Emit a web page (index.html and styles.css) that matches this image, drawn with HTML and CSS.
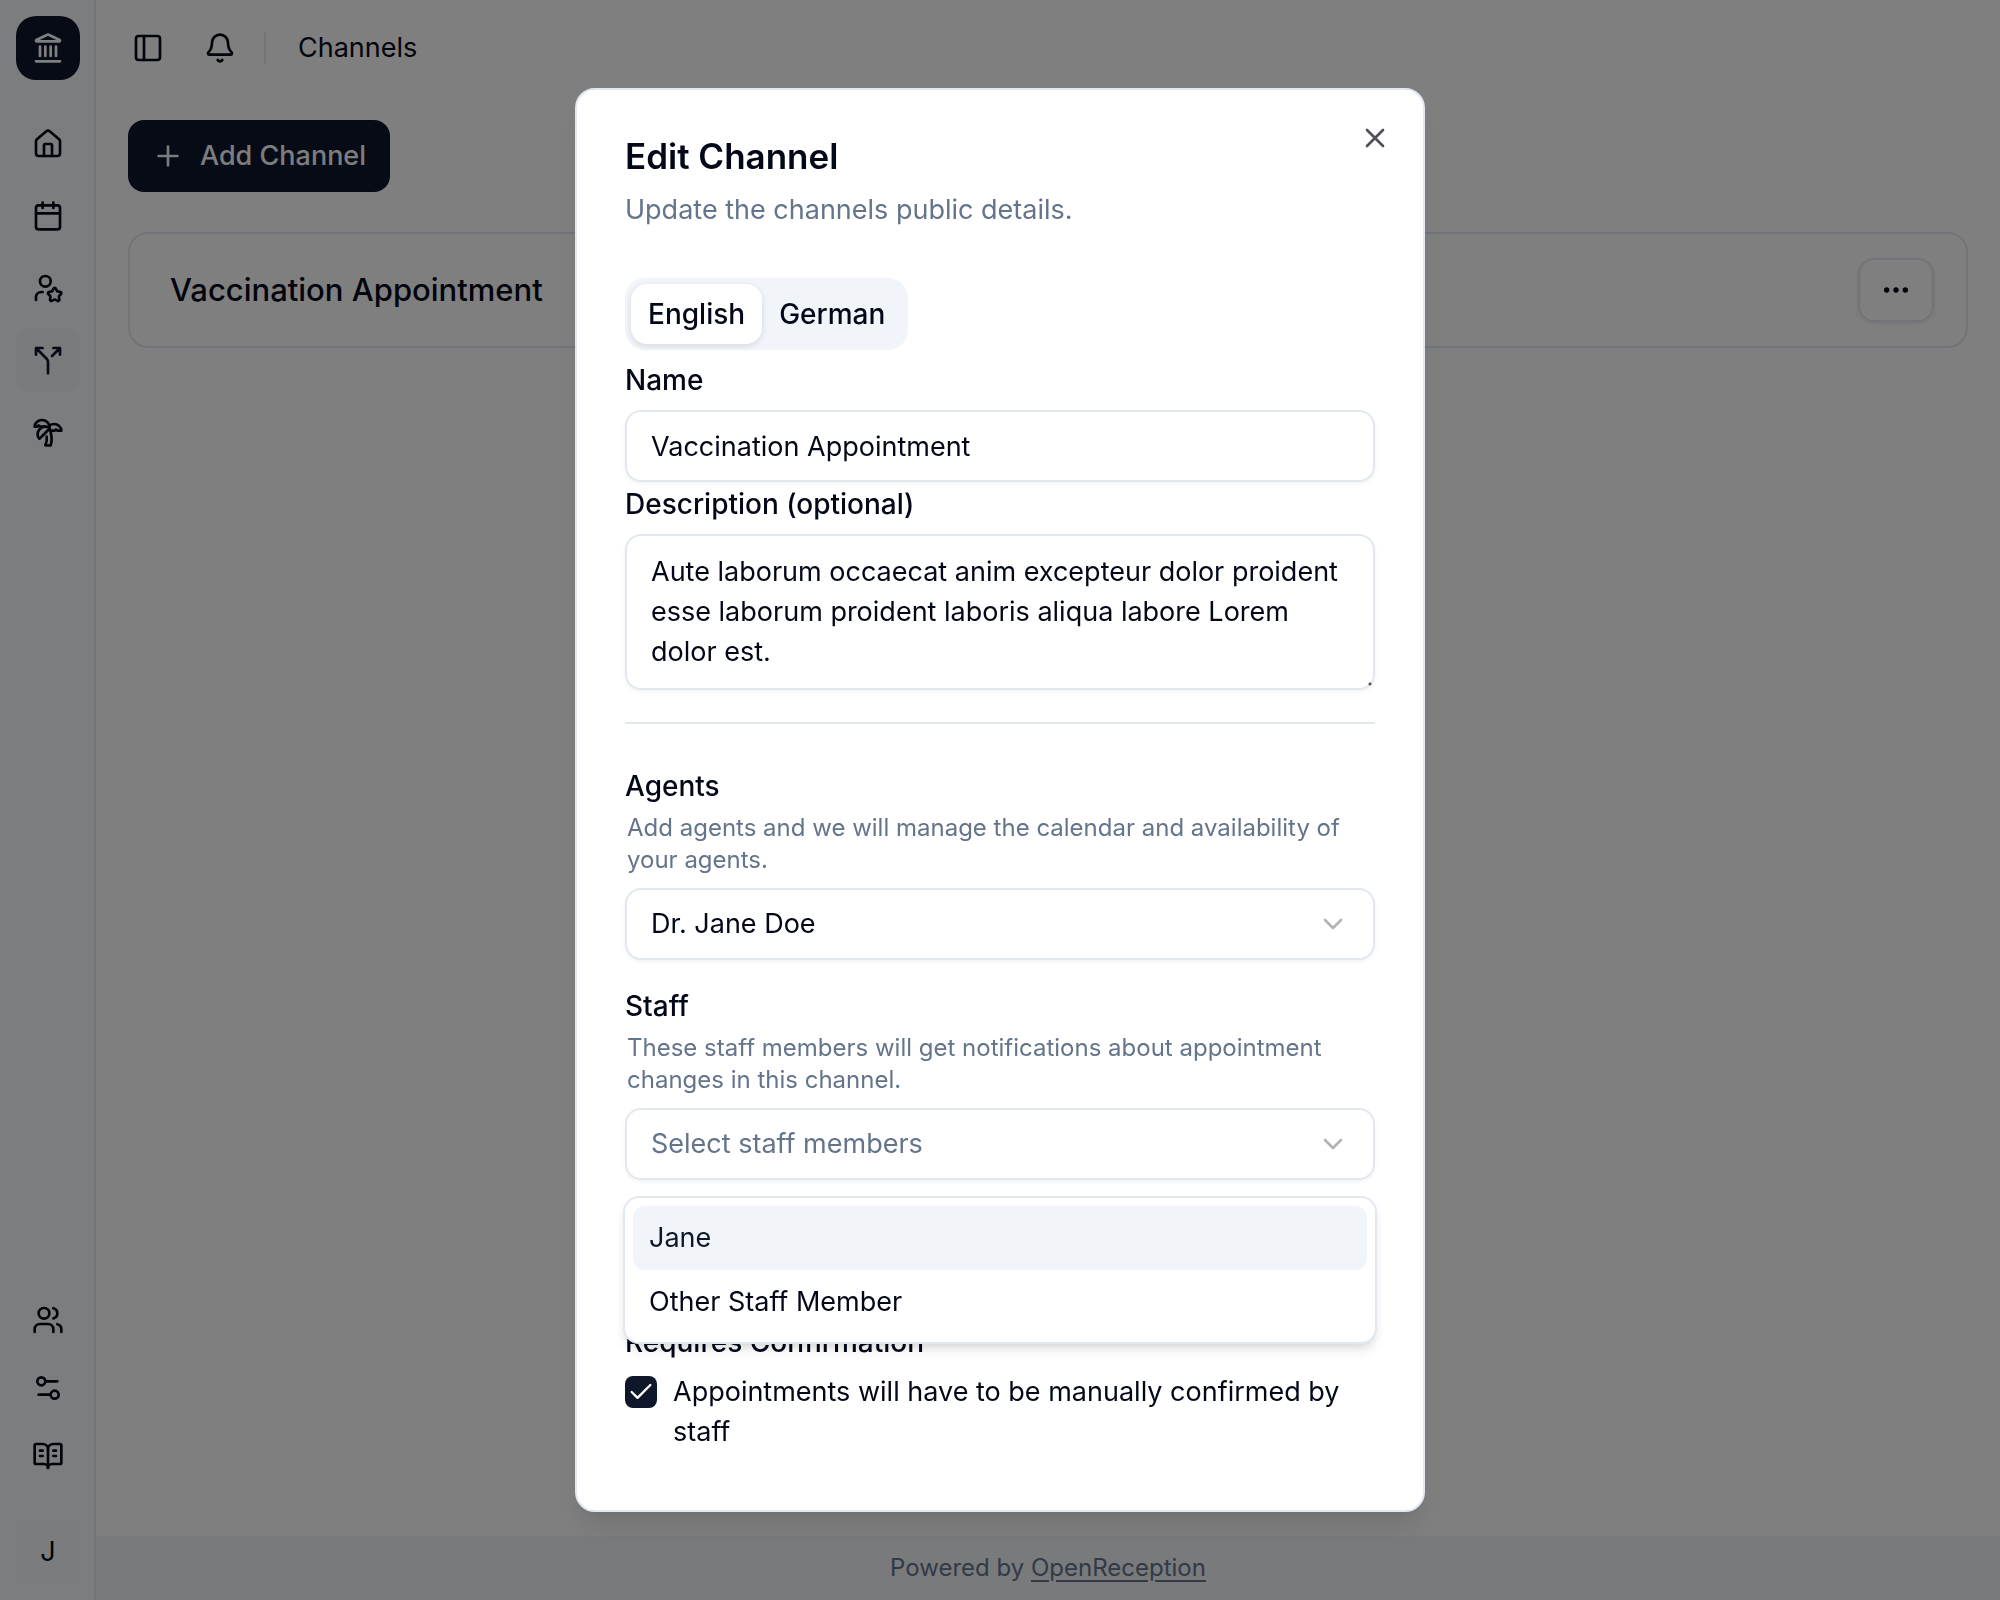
FILE: index.html
```html
<!DOCTYPE html>
<html lang="en">
<head>
<meta charset="utf-8">
<meta name="viewport" content="width=device-width, initial-scale=1">
<title>Channels</title>
<link rel="stylesheet" href="styles.css">
</head>
<body>
<div class="app">
  <aside class="sidebar">
    <a class="logo" href="#" aria-label="OpenReception">
      <svg class="icon" viewBox="0 0 24 24"><path d="M10 18v-7M14 18v-7M18 18v-7M6 18v-7M3 22h18"/><path d="M11.120 2.198a2 2 0 0 1 1.760.006l7.866 3.847c.476.233.310.949-.220.949H3.474c-.530 0-.695-.716-.220-.949z"/></svg>
    </a>
    <nav class="nav">
      <a class="nav-link" href="#" aria-label="Home"><svg class="icon" viewBox="0 0 24 24"><path d="M15 21v-8a1 1 0 0 0-1-1h-4a1 1 0 0 0-1 1v8"/><path d="M3 10a2 2 0 0 1 .709-1.528l7-5.999a2 2 0 0 1 2.582 0l7 5.999A2 2 0 0 1 21 10v9a2 2 0 0 1-2 2H5a2 2 0 0 1-2-2z"/></svg></a>
      <a class="nav-link" href="#" aria-label="Calendar"><svg class="icon" viewBox="0 0 24 24"><path d="M8 2v4M16 2v4M3 10h18"/><rect x="3" y="4" width="18" height="18" rx="2"/></svg></a>
      <a class="nav-link" href="#" aria-label="Agents"><svg class="icon" viewBox="0 0 24 24"><path d="M16.051 12.616a1 1 0 0 1 1.909.024l.737 1.452a1 1 0 0 0 .737.535l1.634.256a1 1 0 0 1 .588 1.806l-1.172 1.168a1 1 0 0 0-.282.866l.259 1.613a1 1 0 0 1-1.541 1.134l-1.465-.75a1 1 0 0 0-.912 0l-1.465.75a1 1 0 0 1-1.539-1.133l.258-1.613a1 1 0 0 0-.282-.866l-1.156-1.153a1 1 0 0 1 .572-1.822l1.633-.256a1 1 0 0 0 .737-.535z"/><path d="M8 15H7a4 4 0 0 0-4 4v2"/><circle cx="10" cy="7" r="4"/></svg></a>
      <a class="nav-link nav-link-active" href="#" aria-label="Channels"><svg class="icon" viewBox="0 0 24 24"><path d="M16 3h5v5M8 3H3v5M12 22v-8.300a4 4 0 0 0-1.172-2.872L3 3M15 9l6-6"/></svg></a>
      <a class="nav-link" href="#" aria-label="Absences"><svg class="icon" viewBox="0 0 24 24"><path d="M13 8c0-2.760-2.460-5-5.500-5S2 5.240 2 8h2l1-1 1 1h4"/><path d="M13 7.140A5.820 5.820 0 0 1 16.500 6c3.040 0 5.500 2.240 5.500 5h-3l-1-1-1 1h-3"/><path d="M5.890 9.710c-2.150 2.150-2.300 5.470-.350 7.430l4.240-4.250.700-.700.710-.710 2.120-2.120c-1.950-1.960-5.270-1.800-7.420.350"/><path d="M11 15.500c.500 2.500-.170 4.500-1 6.500h4c2-5.500-.500-12-1-14"/></svg></a>
    </nav>
    <nav class="nav nav-bottom">
      <a class="nav-link" href="#" aria-label="Users"><svg class="icon" viewBox="0 0 24 24"><path d="M16 21v-2a4 4 0 0 0-4-4H6a4 4 0 0 0-4 4v2"/><path d="M16 3.128a4 4 0 0 1 0 7.744"/><path d="M22 21v-2a4 4 0 0 0-3-3.870"/><circle cx="9" cy="7" r="4"/></svg></a>
      <a class="nav-link" href="#" aria-label="Settings"><svg class="icon" viewBox="0 0 24 24"><path d="M14 17H5M19 7h-9"/><circle cx="17" cy="17" r="3"/><circle cx="7" cy="7" r="3"/></svg></a>
      <a class="nav-link" href="#" aria-label="Documentation"><svg class="icon" viewBox="0 0 24 24"><path d="M12 7v14M16 12h2M16 8h2M6 12h2M6 8h2"/><path d="M3 18a1 1 0 0 1-1-1V4a1 1 0 0 1 1-1h5a4 4 0 0 1 4 4 4 4 0 0 1 4-4h5a1 1 0 0 1 1 1v13a1 1 0 0 1-1 1h-6a3 3 0 0 0-3 3 3 3 0 0 0-3-3z"/></svg></a>
    </nav>
    <button class="avatar" type="button">J</button>
  </aside>
  <div class="page">
    <header class="topbar">
      <button class="icon-button" type="button" aria-label="Toggle sidebar"><svg class="icon" viewBox="0 0 24 24"><rect x="3" y="3" width="18" height="18" rx="2"/><path d="M9 3v18"/></svg></button>
      <button class="icon-button" type="button" aria-label="Notifications"><svg class="icon" viewBox="0 0 24 24"><path d="M10.268 21a2 2 0 0 0 3.464 0"/><path d="M3.262 15.326A1 1 0 0 0 4 17h16a1 1 0 0 0 .740-1.673C19.410 13.956 18 12.499 18 8A6 6 0 0 0 6 8c0 4.499-1.411 5.956-2.738 7.326"/></svg></button>
      <span class="topbar-divider"></span>
      <h1 class="topbar-title">Channels</h1>
    </header>
    <main class="content">
      <button class="primary-button" type="button"><svg class="icon" viewBox="0 0 24 24"><path d="M5 12h14M12 5v14"/></svg>Add Channel</button>
      <article class="channel">
        <h2 class="channel-name">Vaccination Appointment</h2>
        <button class="more-button" type="button" aria-label="More"><svg class="icon" viewBox="0 0 24 24"><circle cx="12" cy="12" r="1"/><circle cx="19" cy="12" r="1"/><circle cx="5" cy="12" r="1"/></svg></button>
      </article>
    </main>
    <footer class="footer">Powered by&nbsp;<a class="footer-link" href="#">OpenReception</a></footer>
  </div>
</div>

<div class="overlay">
  <form class="dialog" role="dialog" aria-modal="true" aria-labelledby="dialog-title">
    <button class="close-button" type="button" aria-label="Close"><svg class="icon" viewBox="0 0 24 24"><path d="M18 6 6 18M6 6l12 12"/></svg></button>
    <h2 class="dialog-title" id="dialog-title">Edit Channel</h2>
    <p class="dialog-text">Update the channels public details.</p>
    <div class="tabs" role="tablist">
      <button class="tab tab-active" type="button" role="tab" aria-selected="true">English</button>
      <button class="tab" type="button" role="tab" aria-selected="false">German</button>
    </div>
    <div class="fields">
      <div class="field">
        <label class="label" for="name">Name</label>
        <input class="control" id="name" type="text" value="Vaccination Appointment">
      </div>
      <div class="field">
        <label class="label" for="description">Description (optional)</label>
        <textarea class="control control-area" id="description" rows="3">Aute laborum occaecat anim excepteur dolor proident esse laborum proident laboris aliqua labore Lorem dolor est.</textarea>
      </div>
    </div>
    <hr class="separator">
    <div class="groups">
      <div class="group">
        <label class="label" for="agents">Agents</label>
        <p class="hint">Add agents and we will manage the calendar and availability of your agents.</p>
        <div class="select">
          <select class="control" id="agents"><option>Dr. Jane Doe</option></select>
          <svg class="icon chevron" viewBox="0 0 24 24"><path d="m6 9 6 6 6-6"/></svg>
        </div>
      </div>
      <div class="group">
        <label class="label" for="staff">Staff</label>
        <p class="hint">These staff members will get notifications about appointment changes in this channel.</p>
        <div class="select">
          <select class="control control-empty" id="staff"><option>Select staff members</option></select>
          <svg class="icon chevron" viewBox="0 0 24 24"><path d="m6 9 6 6 6-6"/></svg>
          <ul class="menu" role="listbox">
            <li class="menu-item menu-item-active" role="option">Jane</li>
            <li class="menu-item" role="option">Other Staff Member</li>
          </ul>
        </div>
      </div>
    </div>
    <div class="field field-confirmation">
      <span class="label">Requires Confirmation</span>
      <label class="check">
        <span class="check-box"><input class="check-input" type="checkbox" checked><svg class="check-mark" viewBox="0 0 24 24"><path d="M20 6 9 17l-5-5"/></svg></span>
        <span>Appointments will have to be manually confirmed by staff</span>
      </label>
    </div>
  </form>
</div>
</body>
</html>
```
FILE: styles.css
```css
:root {
  --ink: #020817;
  --primary: #0f172a;
  --muted: #64748b;
  --line: #e2e8f0;
  --soft: #f1f5f9;
}

* { box-sizing: border-box; }

body {
  margin: 0;
  background: #fff;
  color: var(--ink);
  font: 400 27px/40px Inter, "Liberation Sans", sans-serif;
}

h1, h2, p, ul { margin: 0; padding: 0; font-weight: inherit; }

button, input, select, textarea { margin: 0; font: inherit; color: inherit; }

button { border: 0; padding: 0; background: none; cursor: pointer; }

.icon {
  display: block;
  flex: none;
  width: 32px;
  height: 32px;
  fill: none;
  stroke: currentColor;
  stroke-width: 2;
  stroke-linecap: round;
  stroke-linejoin: round;
}

/* App shell */
.app { display: flex; min-height: 100vh; }

.sidebar {
  display: flex;
  flex: none;
  flex-direction: column;
  align-items: center;
  width: 96px;
  padding: 16px 0;
  background: #f8fafc;
  box-shadow: inset -2px 0 var(--line);
}

.logo, .nav-link, .avatar {
  display: flex;
  align-items: center;
  justify-content: center;
  width: 64px;
  height: 64px;
  border-radius: 16px;
  color: var(--ink);
}

.logo { border-radius: 20px; background: var(--primary); color: #fff; }

.nav { display: flex; flex-direction: column; gap: 8px; margin-top: 32px; }
.nav-bottom { gap: 4px; margin-top: auto; }
.nav-link-active { background: #f4f7fa; color: var(--primary); }
.avatar { margin-top: 32px; background: #f5f8fb; }

.page { display: flex; flex: 1; flex-direction: column; min-width: 0; }

.topbar { display: flex; align-items: center; height: 96px; padding: 0 32px; }
.icon-button { display: grid; place-items: center; width: 40px; height: 56px; margin-right: 32px; }
.topbar-divider { width: 2px; height: 32px; margin-left: -8px; background: var(--line); }
.topbar-title { margin-left: 32px; font-size: 27px; }

.content { display: flex; flex: 1; flex-direction: column; align-items: flex-start; gap: 40px; padding: 24px 32px; }

.primary-button {
  display: flex;
  align-items: center;
  gap: 16px;
  height: 72px;
  padding: 0 24px;
  border-radius: 16px;
  background: var(--primary);
  color: #f8fafc;
  font-weight: 500;
}

.channel {
  display: flex;
  align-items: center;
  justify-content: space-between;
  width: 100%;
  padding: 24px 32px 24px 40px;
  border: 2px solid var(--line);
  border-radius: 20px;
}
.channel-name { font-size: 31px; font-weight: 500; }
.more-button {
  display: grid;
  place-items: center;
  width: 76px;
  height: 64px;
  border: 2px solid var(--line);
  border-radius: 16px;
  box-shadow: 0 2px 4px rgb(0 0 0 / 8%);
}

.footer {
  display: flex;
  align-items: center;
  justify-content: center;
  height: 64px;
  background: var(--soft);
  color: var(--muted);
  font-size: 24px;
}
.footer-link { color: inherit; text-underline-offset: 4px; }

/* Dialog */
.overlay {
  position: fixed;
  inset: 0;
  display: grid;
  place-items: center;
  overflow: auto;
  background: rgb(0 0 0 / 50%);
}

.dialog {
  position: relative;
  width: 850px;
  max-width: 100%;
  padding: 48px 48px 58px;
  border: 2px solid var(--line);
  border-radius: 20px;
  background: #fff;
  box-shadow: 0 20px 30px -6px rgb(0 0 0 / 10%), 0 8px 12px -8px rgb(0 0 0 / 10%);
}

.close-button { position: absolute; top: 32px; right: 32px; opacity: .7; }

.dialog-title { font-size: 35px; font-weight: 600; line-height: 36px; }
.dialog-text { margin-top: 16px; color: var(--muted); }

.tabs {
  display: inline-flex;
  height: 72px;
  margin-top: 48px;
  padding: 6px;
  border-radius: 20px;
  background: var(--soft);
  vertical-align: top;
}
.tab { padding: 0 17px; border-radius: 16px; font-size: 28px; font-weight: 500; }
.tab-active { background: #fff; box-shadow: 0 2px 6px rgb(0 0 0 / 12%); }

.fields { display: grid; gap: 8px; margin-top: 16px; }
.field { display: grid; gap: 16px; }
.label { font-size: 28px; font-weight: 500; line-height: 28px; }

.control {
  display: block;
  width: 100%;
  height: 72px;
  padding: 0 24px;
  border: 2px solid var(--line);
  border-radius: 16px;
  outline: 0;
  background: #fff;
  box-shadow: 0 2px 4px rgb(0 0 0 / 5%);
  appearance: none;
}
.control-area { height: auto; padding: 16px 24px; resize: vertical; overflow: hidden; }
.control-area::-webkit-resizer { background: radial-gradient(circle at 12px 11px, #555 1px, transparent 2px); }
.control-empty { color: var(--muted); }

.separator { height: 2px; margin: 32px 0 48px; border: 0; background: var(--line); }

.groups { display: grid; gap: 32px; }
.group { display: grid; gap: 12px; }
.hint { padding: 0 2px; color: var(--muted); font-size: 24px; line-height: 32px; }

.select { position: relative; }
.chevron { position: absolute; top: 20px; right: 26px; opacity: .3; pointer-events: none; }

.menu {
  position: absolute;
  top: calc(100% + 16px);
  right: -2px;
  left: -2px;
  padding: 8px;
  border: 2px solid var(--line);
  border-radius: 16px;
  background: #fff;
  box-shadow: 0 8px 12px -2px rgb(0 0 0 / 10%), 0 4px 8px -4px rgb(0 0 0 / 10%);
  list-style: none;
}
.menu-item { padding: 12px 16px; border-radius: 12px; }
.menu-item-active { background: var(--soft); color: var(--primary); }

.field-confirmation { margin-top: 148px; }
.check { display: flex; align-items: flex-start; gap: 16px; }
.check-box { display: grid; flex: none; margin-top: 4px; }
.check-input {
  grid-area: 1 / 1;
  width: 32px;
  height: 32px;
  border-radius: 8px;
  background: var(--primary);
  appearance: none;
}
.check-mark {
  grid-area: 1 / 1;
  place-self: center;
  width: 28px;
  height: 28px;
  fill: none;
  stroke: #fff;
  stroke-width: 2;
  stroke-linecap: round;
  stroke-linejoin: round;
  pointer-events: none;
}
```
